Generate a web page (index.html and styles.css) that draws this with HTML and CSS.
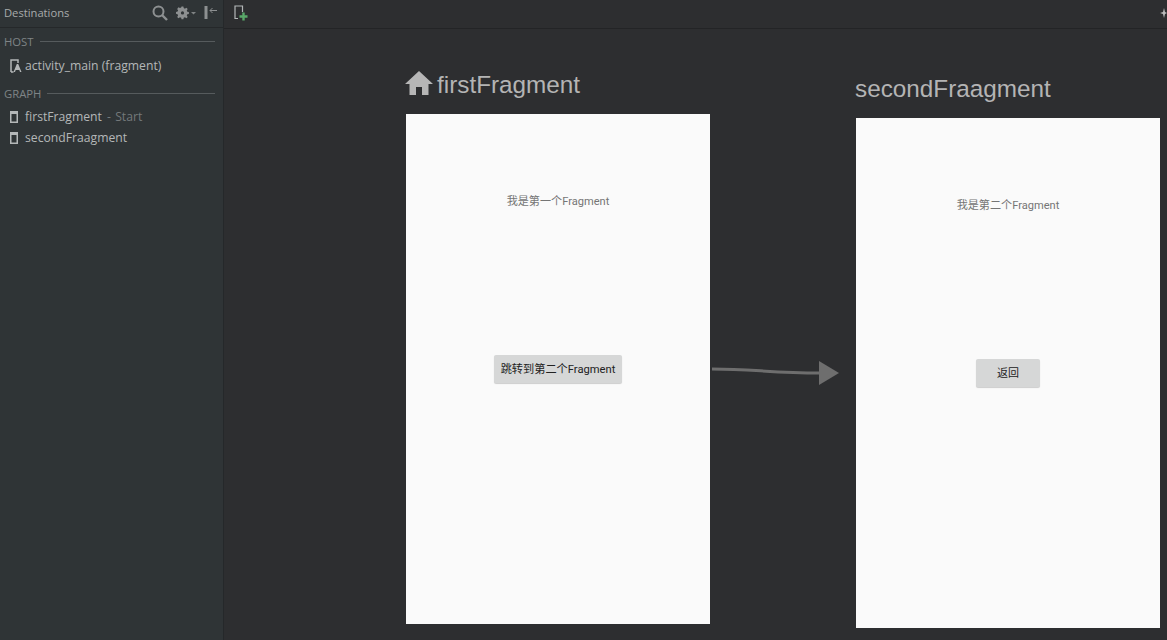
FILE: index.html
```html
<!DOCTYPE html>
<html lang="en">
<head>
  <meta charset="UTF-8">
  <title>Navigation Editor</title>
  <link rel="stylesheet" href="styles.css">
</head>
<body>
  <div class="editor">
    <aside class="sidebar">
      <div class="side-head">
        <span class="side-title">Destinations</span>
        <div class="side-tools">
          <svg width="16" height="16" viewBox="0 0 16 16"><circle cx="6.500" cy="6.500" r="5" fill="none" stroke="#8d9091" stroke-width="2"/><path d="M10 10l5 5" stroke="#8d9091" stroke-width="2.400"/></svg>
          <svg width="20" height="14" viewBox="0 0 20 14"><path d="M6 0.500h2l.4 1.800 1.300.6 1.600-1 1.400 1.400-1 1.600.6 1.300 1.700.4v2l-1.700.4-.6 1.300 1 1.600-1.400 1.400-1.600-1-1.300.6-.4 1.600H6l-.4-1.600-1.300-.6-1.600 1-1.400-1.400 1-1.600-.6-1.300L0 8.500v-2l1.700-.4.600-1.300-1-1.600L2.700 1.300l1.600 1 1.300-.6z" fill="#8d9091" transform="scale(.92)"/><circle cx="6.500" cy="6.900" r="1.600" fill="#2f3436"/><path d="M15 6h5l-2.500 2.500z" fill="#7f8283"/></svg>
          <svg width="13" height="13" viewBox="0 0 13 13"><path d="M0.500 0h3v13h-3z" fill="#8d9091"/><path d="M6 4.500h7M6 4.500l2.500-2.500M6 4.500l2.500 2.500" stroke="#8d9091" stroke-width="1" fill="none"/></svg>
        </div>
      </div>
      <div class="section-label"><span>HOST</span><i></i></div>
      <div class="tree-row host-row">
        <svg width="12" height="14" viewBox="0 0 12 14"><path d="M1 13V1h7v3" fill="none" stroke="#b4b7b8" stroke-width="1.500"/><path d="M3.500 13L6.800 5h1.400l3.300 8h-1.500l-.7-2H5.700L5 13z" fill="#b4b7b8"/><path d="M1 13h2.500" stroke="#b4b7b8" stroke-width="1.500"/></svg>
        <span>activity_main (fragment)</span>
      </div>
      <div class="section-label graph-label"><span>GRAPH</span><i></i></div>
      <div class="tree-row">
        <svg width="8" height="12" viewBox="0 0 8 12"><path d="M.75.75h6.500v10.500H.75z" fill="none" stroke="#b4b7b8" stroke-width="1.500"/><path d="M1 1h6v2H1z" fill="#b4b7b8"/></svg>
        <span>firstFragment <em>- Start</em></span>
      </div>
      <div class="tree-row">
        <svg width="8" height="12" viewBox="0 0 8 12"><path d="M.75.75h6.500v10.500H.75z" fill="none" stroke="#b4b7b8" stroke-width="1.500"/><path d="M1 1h6v2H1z" fill="#b4b7b8"/></svg>
        <span>secondFraagment</span>
      </div>
    </aside>

    <main class="design">
      <div class="toolbar">
        <svg width="15" height="16" viewBox="0 0 15 16"><path d="M4 13.500H1V1h7.500v6" fill="none" stroke="#b4b7b8" stroke-width="1.200"/><path d="M9.500 7.500v8M5.500 11.500h8" stroke="#59a869" stroke-width="2.400"/></svg>
        <svg width="7" height="10" viewBox="0 0 7 10"><path d="M4 0l1 4 2 1-2 1-1 4-1-4-3-1 3-1z" fill="#bbb"/></svg>
      </div>
      <div class="canvas">
        <div class="node node-first">
          <div class="node-title">
            <svg class="home-icon" width="28" height="24" viewBox="0 0 28 24"><path d="M14 0L0 13h4.500v11h6.500v-8h6v8h6.500V13H28z" fill="#b6b6b6"/></svg>
            <span>firstFragment</span>
          </div>
          <div class="phone">
            <p class="phone-text">我是第一个Fragment</p>
            <div class="phone-btn">跳转到第二个Fragment</div>
          </div>
        </div>

        <svg class="arrow" width="130" height="30" viewBox="0 0 130 30"><path d="M0 12c40 0 60 4 108 4" fill="none" stroke="#6e6e6e" stroke-width="3"/><path d="M107 4l20 12-20 12z" fill="#6e6e6e"/></svg>

        <div class="node node-second">
          <div class="node-title"><span>secondFraagment</span></div>
          <div class="phone">
            <p class="phone-text">我是第二个Fragment</p>
            <div class="phone-btn back-btn">返回</div>
          </div>
        </div>
      </div>
    </main>
  </div>
</body>
</html>
```

FILE: styles.css
```css
html, body {
  margin: 0;
  height: 100%;
  overflow: hidden;
}
body {
  background: #2d2e30;
  font-family: "Open Sans", "Noto Sans", "Noto Sans CJK SC", sans-serif;
  color: #b4b7b8;
}
.editor {
  display: flex;
  width: 1167px;
  height: 640px;
}

/* left panel */
.sidebar {
  width: 223px;
  flex: none;
  background: #2f3436;
  border-right: 1px solid #25282a;
  font-size: 12.200px;
}
.side-head {
  height: 28px;
  box-sizing: border-box;
  display: flex;
  align-items: center;
  justify-content: space-between;
  padding: 0 6px 2px 4px;
  border-bottom: 1px solid #25282a;
}
.side-title {
  font-size: 11.200px;
  color: #a8abac;
}
.side-tools {
  display: flex;
  align-items: center;
  gap: 8px;
}
.section-label {
  display: flex;
  align-items: center;
  gap: 6px;
  height: 16px;
  margin: 5px 8px 0 4px;
  font-size: 11.300px;
  color: #7f8486;
}
.section-label i {
  flex: 1;
  height: 1px;
  background: #565b5d;
}
.graph-label {
  margin-top: 9px;
}
.tree-row {
  display: flex;
  align-items: center;
  gap: 6px;
  height: 21px;
  padding-left: 10px;
  color: #b4b7b8;
}
.tree-row svg {
  width: 8px;
  margin-right: 1px;
  flex: none;
}
.tree-row em {
  font-style: normal;
  word-spacing: 1px;
  margin-left: 2px;
  color: #74797b;
}
.host-row {
  margin-top: 6px;
  gap: 3px;
}
.host-row svg {
  width: 12px;
  margin-right: 0;
}
.section-label + .tree-row:not(.host-row) {
  margin-top: 5px;
}

/* design surface */
.design {
  flex: 1;
  display: flex;
  flex-direction: column;
}
.toolbar {
  height: 29px;
  box-sizing: border-box;
  display: flex;
  align-items: center;
  justify-content: space-between;
  padding: 0 0 3px 10px;
  border-bottom: 1px solid #232426;
  flex: none;
}
.canvas {
  position: relative;
  flex: 1;
}
.node {
  position: absolute;
  width: 304px;
}
.node-first {
  left: 182px;
  top: 41px;
}
.node-second {
  left: 632px;
  top: 45px;
}
.node-title {
  display: flex;
  align-items: center;
  gap: 4px;
  height: 30px;
  padding-bottom: 14px;
  margin-left: -1px;
  font-family: "Liberation Sans", sans-serif;
  font-size: 24.300px;
  color: #b4b4b4;
  white-space: nowrap;
}
.home-icon {
  margin-bottom: 4px;
}
.phone {
  height: 510px;
  background: #fafafa;
  display: flex;
  flex-direction: column;
  align-items: center;
}
.phone-text {
  margin: 80px 0 0;
  font-family: "Roboto", "Noto Sans CJK SC", sans-serif;
  font-size: 11.100px;
  line-height: 16px;
  color: #757575;
}
.phone-btn {
  margin-top: 145px;
  height: 28px;
  box-sizing: border-box;
  padding: 0 7px 2px;
  display: flex;
  align-items: center;
  background: #d6d7d7;
  border-radius: 2px;
  box-shadow: 0 1px 1px rgba(0, 0, 0, 0.18);
  font-family: "Roboto", "Noto Sans CJK SC", sans-serif;
  font-size: 11.200px;
  color: #222;
}
.back-btn {
  width: 64px;
  justify-content: center;
  padding: 0 0 2px;
  font-size: 11px;
}
.arrow {
  position: absolute;
  left: 488px;
  top: 328px;
}
```
